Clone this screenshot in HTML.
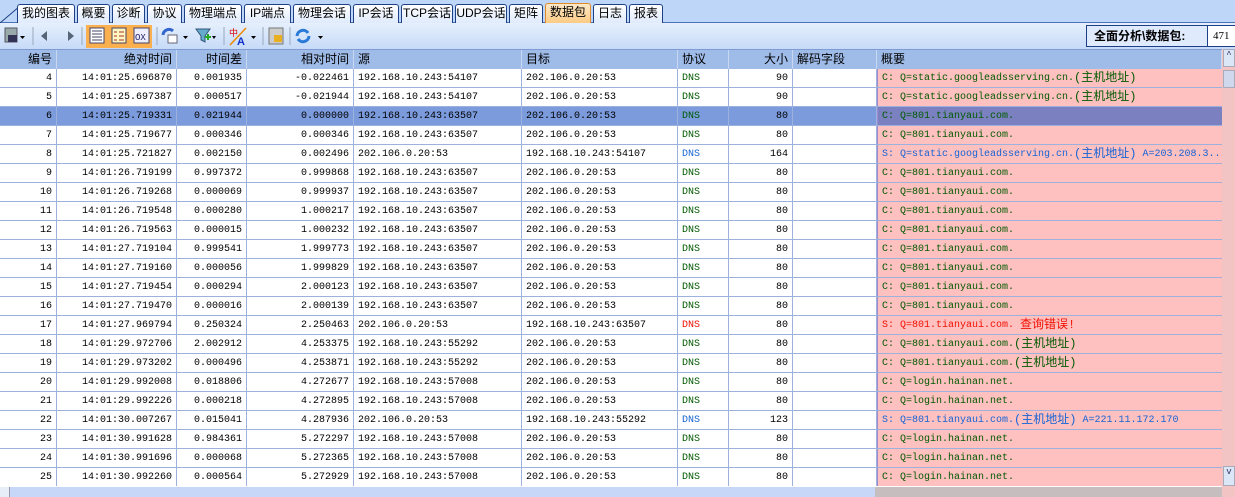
<!DOCTYPE html>
<html><head><meta charset="utf-8"><style>
*{margin:0;padding:0;box-sizing:border-box}
body{width:1235px;height:497px;overflow:hidden;background:#fff;position:relative;font-family:"Liberation Mono","Noto Sans CJK SC",monospace;font-size:10px}
.tabs{position:absolute;left:0;top:0;width:1235px;height:23px;background:#bed6f7;border-bottom:1px solid #4e72b8}
.tab{position:absolute;top:4px;height:19px;border:1px solid #1c3f86;border-bottom:none;border-radius:3px 3px 0 0;background:linear-gradient(#fff,#dfeafc);font-size:12px;line-height:17px;text-align:center;font-family:"Liberation Sans","Noto Sans CJK SC",sans-serif;color:#000;white-space:nowrap;overflow:hidden}
.tab.act{background:linear-gradient(#fde9c8,#fcc980);top:3px;height:21px;border-color:#e08a2a}
.tb{position:absolute;left:0;top:23px;width:1235px;height:26px;background:linear-gradient(#e6f0fd,#c6daf8)}
.hdr{position:absolute;left:0;top:49px;height:20px;width:1222px;background:#9fbbe8;border-top:1px solid #7f9bd4;display:flex}
.hdr div{height:19px;border-right:1px solid #c8d8f2;font-size:12px;line-height:19px;padding:0 4px;font-family:"Liberation Sans","Noto Sans CJK SC",sans-serif;white-space:nowrap;overflow:hidden}
.r{position:absolute;left:0;height:19px;width:1222px;display:flex;border-bottom:1px solid #9cb1dc}
.r div{height:18px;line-height:19px;border-right:1px solid #9cb1dc;padding:0 4px;white-space:nowrap;overflow:hidden;color:#000}
.c1{width:57px;text-align:right}.c2{width:120px;text-align:right}.c3{width:70px;text-align:right}.c4{width:107px;text-align:right}.c5{width:168px}.c6{width:156px}.c7{width:51px}.c8{width:64px;text-align:right}.c9{width:84px}.c10{width:345px;background:#ffc0c0}
.r .c10{border-left:1px solid #9c8cd0;border-right:none}
.sel{background:#7b9bdc}.sel .c10{background:#7b80c0}
.g{color:#005a00!important}.b{color:#1664d4!important}.rd{color:#f01000!important}
.k{font-size:12px;line-height:10px;display:inline-block;vertical-align:top;margin-top:4px}
</style></head><body>
<div class="tabs">
<svg style="position:absolute;left:0;top:4px" width="20" height="19"><path d="M0 19 L20 2" stroke="#1c3f86" fill="none"/></svg>
<div class="tab" style="left:17px;width:58px">我的图表</div>
<div class="tab" style="left:77px;width:33px">概要</div>
<div class="tab" style="left:112px;width:33px">诊断</div>
<div class="tab" style="left:147px;width:35px">协议</div>
<div class="tab" style="left:184px;width:58px">物理端点</div>
<div class="tab" style="left:244px;width:47px">IP端点</div>
<div class="tab" style="left:293px;width:58px">物理会话</div>
<div class="tab" style="left:353px;width:46px">IP会话</div>
<div class="tab" style="left:401px;width:52px">TCP会话</div>
<div class="tab" style="left:455px;width:52px">UDP会话</div>
<div class="tab" style="left:509px;width:34px">矩阵</div>
<div class="tab act" style="left:545px;width:46px">数据包</div>
<div class="tab" style="left:593px;width:34px">日志</div>
<div class="tab" style="left:629px;width:34px">报表</div>
</div>
<div class="tb">
<svg style="position:absolute;left:0;top:0" width="340" height="26">
<rect x="5" y="5" width="12" height="14" fill="#9aa" stroke="#556"/><rect x="8" y="12" width="9" height="7" fill="#335"/><path d="M20 13h5l-2.5 3z" fill="#000"/>
<line x1="33" y1="4" x2="33" y2="22" stroke="#9ab"/>
<path d="M41 13l6-5v10z" fill="#567"/><path d="M74 13l-6-5v10z" fill="#567"/>
<line x1="82" y1="4" x2="82" y2="22" stroke="#9ab"/>
<rect x="86" y="2" width="66" height="23" fill="#fbb050"/>
<rect x="90" y="5" width="14" height="15" fill="#fff" stroke="#446"/><path d="M92 8h10M92 11h10M92 14h10M92 17h10" stroke="#446"/>
<rect x="112" y="5" width="14" height="15" fill="#fff6c0" stroke="#446"/><path d="M114 9h3M119 9h5M114 13h3M119 13h5M114 17h3M119 17h5" stroke="#a33"/>
<rect x="134" y="5" width="15" height="15" fill="#eef" stroke="#446"/><text x="135" y="17" font-size="9" fill="#226">OX</text>
<line x1="157" y1="4" x2="157" y2="22" stroke="#9ab"/>
<path d="M163 12a6 6 0 0 1 10-4" stroke="#36c" stroke-width="3" fill="none"/><rect x="168" y="12" width="9" height="8" fill="#fff" stroke="#667"/><path d="M183 13h5l-2.5 3z" fill="#000"/>
<path d="M196 6h14l-5 7v6l-4-2v-4z" fill="#6ac" stroke="#357"/><path d="M205 14h6M208 11v6" stroke="#2a2" stroke-width="2"/><path d="M212 13h4l-2 3z" fill="#000"/>
<line x1="224" y1="4" x2="224" y2="22" stroke="#9ab"/>
<text x="229" y="13" font-size="9" fill="#d00" font-family="Noto Sans CJK SC">中</text><text x="237" y="22" font-size="11" fill="#13c" font-weight="bold" font-family="Liberation Sans">A</text><path d="M230 22l16-17" stroke="#e80" stroke-width="1.5"/><path d="M251 13h5l-2.5 3z" fill="#000"/>
<line x1="263" y1="4" x2="263" y2="22" stroke="#9ab"/>
<rect x="269" y="5" width="14" height="16" fill="#ccc" stroke="#777"/><rect x="274" y="12" width="8" height="7" fill="#e8b020"/>
<line x1="290" y1="4" x2="290" y2="22" stroke="#9ab"/>
<path d="M297 13a6 6 0 0 1 11-3M309 13a6 6 0 0 1-11 3" stroke="#2a7ad8" stroke-width="3" fill="none"/><path d="M318 13h5l-2.5 3z" fill="#000"/>
</svg>
<div style="position:absolute;left:1086px;top:2px;width:122px;height:22px;border:1px solid #1c3f86;background:#dfeafc;font:bold 12px 'Liberation Sans','Noto Sans CJK SC',sans-serif;line-height:20px;padding-left:7px">全面分析\数据包:</div>
<div style="position:absolute;left:1207px;top:2px;width:28px;height:22px;border:1px solid #1c3f86;border-right:none;background:#fff;font:11px 'Liberation Serif',serif;line-height:20px;padding-left:5px">471</div>
</div>
<div class="hdr">
<div style="width:57px;text-align:right">编号</div><div style="width:120px;text-align:right">绝对时间</div><div style="width:70px;text-align:right">时间差</div><div style="width:107px;text-align:right">相对时间</div><div style="width:168px">源</div><div style="width:156px">目标</div><div style="width:51px">协议</div><div style="width:64px;text-align:right">大小</div><div style="width:84px">解码字段</div><div style="width:345px">概要</div>
</div>
<div style="position:absolute;left:1222px;top:49px;width:13px;height:438px;background:#f2c4c4"></div>
<div style="position:absolute;left:1223px;top:49px;width:12px;height:18px;background:#dbe6f6;border:1px solid #aab;font-size:9px;text-align:center;color:#336">^</div>
<div style="position:absolute;left:1223px;top:70px;width:12px;height:18px;background:#cfd8ec;border:1px solid #aab"></div>
<div style="position:absolute;left:1223px;top:466px;width:12px;height:20px;background:#dbe6f6;border:1px solid #aab;font-size:9px;text-align:center;color:#336">v</div>

<div class="r" style="top:69px"><div class="c1">4</div><div class="c2">14:01:25.696870</div><div class="c3">0.001935</div><div class="c4">-0.022461</div><div class="c5">192.168.10.243:54107</div><div class="c6">202.106.0.20:53</div><div class="c7 g">DNS</div><div class="c8">90</div><div class="c9"></div><div class="c10 g">C: Q=static.googleadsserving.cn.<span class="k">(主机地址)</span></div></div>
<div class="r" style="top:88px"><div class="c1">5</div><div class="c2">14:01:25.697387</div><div class="c3">0.000517</div><div class="c4">-0.021944</div><div class="c5">192.168.10.243:54107</div><div class="c6">202.106.0.20:53</div><div class="c7 g">DNS</div><div class="c8">90</div><div class="c9"></div><div class="c10 g">C: Q=static.googleadsserving.cn.<span class="k">(主机地址)</span></div></div>
<div class="r sel" style="top:107px"><div class="c1">6</div><div class="c2">14:01:25.719331</div><div class="c3">0.021944</div><div class="c4">0.000000</div><div class="c5">192.168.10.243:63507</div><div class="c6">202.106.0.20:53</div><div class="c7 g">DNS</div><div class="c8">80</div><div class="c9"></div><div class="c10 g">C: Q=801.tianyaui.com.</div></div>
<div class="r" style="top:126px"><div class="c1">7</div><div class="c2">14:01:25.719677</div><div class="c3">0.000346</div><div class="c4">0.000346</div><div class="c5">192.168.10.243:63507</div><div class="c6">202.106.0.20:53</div><div class="c7 g">DNS</div><div class="c8">80</div><div class="c9"></div><div class="c10 g">C: Q=801.tianyaui.com.</div></div>
<div class="r" style="top:145px"><div class="c1">8</div><div class="c2">14:01:25.721827</div><div class="c3">0.002150</div><div class="c4">0.002496</div><div class="c5">202.106.0.20:53</div><div class="c6">192.168.10.243:54107</div><div class="c7 b">DNS</div><div class="c8">164</div><div class="c9"></div><div class="c10 b">S: Q=static.googleadsserving.cn.<span class="k">(主机地址)</span> A=203.208.3..</div></div>
<div class="r" style="top:164px"><div class="c1">9</div><div class="c2">14:01:26.719199</div><div class="c3">0.997372</div><div class="c4">0.999868</div><div class="c5">192.168.10.243:63507</div><div class="c6">202.106.0.20:53</div><div class="c7 g">DNS</div><div class="c8">80</div><div class="c9"></div><div class="c10 g">C: Q=801.tianyaui.com.</div></div>
<div class="r" style="top:183px"><div class="c1">10</div><div class="c2">14:01:26.719268</div><div class="c3">0.000069</div><div class="c4">0.999937</div><div class="c5">192.168.10.243:63507</div><div class="c6">202.106.0.20:53</div><div class="c7 g">DNS</div><div class="c8">80</div><div class="c9"></div><div class="c10 g">C: Q=801.tianyaui.com.</div></div>
<div class="r" style="top:202px"><div class="c1">11</div><div class="c2">14:01:26.719548</div><div class="c3">0.000280</div><div class="c4">1.000217</div><div class="c5">192.168.10.243:63507</div><div class="c6">202.106.0.20:53</div><div class="c7 g">DNS</div><div class="c8">80</div><div class="c9"></div><div class="c10 g">C: Q=801.tianyaui.com.</div></div>
<div class="r" style="top:221px"><div class="c1">12</div><div class="c2">14:01:26.719563</div><div class="c3">0.000015</div><div class="c4">1.000232</div><div class="c5">192.168.10.243:63507</div><div class="c6">202.106.0.20:53</div><div class="c7 g">DNS</div><div class="c8">80</div><div class="c9"></div><div class="c10 g">C: Q=801.tianyaui.com.</div></div>
<div class="r" style="top:240px"><div class="c1">13</div><div class="c2">14:01:27.719104</div><div class="c3">0.999541</div><div class="c4">1.999773</div><div class="c5">192.168.10.243:63507</div><div class="c6">202.106.0.20:53</div><div class="c7 g">DNS</div><div class="c8">80</div><div class="c9"></div><div class="c10 g">C: Q=801.tianyaui.com.</div></div>
<div class="r" style="top:259px"><div class="c1">14</div><div class="c2">14:01:27.719160</div><div class="c3">0.000056</div><div class="c4">1.999829</div><div class="c5">192.168.10.243:63507</div><div class="c6">202.106.0.20:53</div><div class="c7 g">DNS</div><div class="c8">80</div><div class="c9"></div><div class="c10 g">C: Q=801.tianyaui.com.</div></div>
<div class="r" style="top:278px"><div class="c1">15</div><div class="c2">14:01:27.719454</div><div class="c3">0.000294</div><div class="c4">2.000123</div><div class="c5">192.168.10.243:63507</div><div class="c6">202.106.0.20:53</div><div class="c7 g">DNS</div><div class="c8">80</div><div class="c9"></div><div class="c10 g">C: Q=801.tianyaui.com.</div></div>
<div class="r" style="top:297px"><div class="c1">16</div><div class="c2">14:01:27.719470</div><div class="c3">0.000016</div><div class="c4">2.000139</div><div class="c5">192.168.10.243:63507</div><div class="c6">202.106.0.20:53</div><div class="c7 g">DNS</div><div class="c8">80</div><div class="c9"></div><div class="c10 g">C: Q=801.tianyaui.com.</div></div>
<div class="r" style="top:316px"><div class="c1">17</div><div class="c2">14:01:27.969794</div><div class="c3">0.250324</div><div class="c4">2.250463</div><div class="c5">202.106.0.20:53</div><div class="c6">192.168.10.243:63507</div><div class="c7 rd">DNS</div><div class="c8">80</div><div class="c9"></div><div class="c10 rd">S: Q=801.tianyaui.com. <span class="k">查询错误!</span></div></div>
<div class="r" style="top:335px"><div class="c1">18</div><div class="c2">14:01:29.972706</div><div class="c3">2.002912</div><div class="c4">4.253375</div><div class="c5">192.168.10.243:55292</div><div class="c6">202.106.0.20:53</div><div class="c7 g">DNS</div><div class="c8">80</div><div class="c9"></div><div class="c10 g">C: Q=801.tianyaui.com.<span class="k">(主机地址)</span></div></div>
<div class="r" style="top:354px"><div class="c1">19</div><div class="c2">14:01:29.973202</div><div class="c3">0.000496</div><div class="c4">4.253871</div><div class="c5">192.168.10.243:55292</div><div class="c6">202.106.0.20:53</div><div class="c7 g">DNS</div><div class="c8">80</div><div class="c9"></div><div class="c10 g">C: Q=801.tianyaui.com.<span class="k">(主机地址)</span></div></div>
<div class="r" style="top:373px"><div class="c1">20</div><div class="c2">14:01:29.992008</div><div class="c3">0.018806</div><div class="c4">4.272677</div><div class="c5">192.168.10.243:57008</div><div class="c6">202.106.0.20:53</div><div class="c7 g">DNS</div><div class="c8">80</div><div class="c9"></div><div class="c10 g">C: Q=login.hainan.net.</div></div>
<div class="r" style="top:392px"><div class="c1">21</div><div class="c2">14:01:29.992226</div><div class="c3">0.000218</div><div class="c4">4.272895</div><div class="c5">192.168.10.243:57008</div><div class="c6">202.106.0.20:53</div><div class="c7 g">DNS</div><div class="c8">80</div><div class="c9"></div><div class="c10 g">C: Q=login.hainan.net.</div></div>
<div class="r" style="top:411px"><div class="c1">22</div><div class="c2">14:01:30.007267</div><div class="c3">0.015041</div><div class="c4">4.287936</div><div class="c5">202.106.0.20:53</div><div class="c6">192.168.10.243:55292</div><div class="c7 b">DNS</div><div class="c8">123</div><div class="c9"></div><div class="c10 b">S: Q=801.tianyaui.com.<span class="k">(主机地址)</span> A=221.11.172.170</div></div>
<div class="r" style="top:430px"><div class="c1">23</div><div class="c2">14:01:30.991628</div><div class="c3">0.984361</div><div class="c4">5.272297</div><div class="c5">192.168.10.243:57008</div><div class="c6">202.106.0.20:53</div><div class="c7 g">DNS</div><div class="c8">80</div><div class="c9"></div><div class="c10 g">C: Q=login.hainan.net.</div></div>
<div class="r" style="top:449px"><div class="c1">24</div><div class="c2">14:01:30.991696</div><div class="c3">0.000068</div><div class="c4">5.272365</div><div class="c5">192.168.10.243:57008</div><div class="c6">202.106.0.20:53</div><div class="c7 g">DNS</div><div class="c8">80</div><div class="c9"></div><div class="c10 g">C: Q=login.hainan.net.</div></div>
<div class="r" style="top:468px;border-bottom:none"><div class="c1">25</div><div class="c2">14:01:30.992260</div><div class="c3">0.000564</div><div class="c4">5.272929</div><div class="c5">192.168.10.243:57008</div><div class="c6">202.106.0.20:53</div><div class="c7 g">DNS</div><div class="c8">80</div><div class="c9"></div><div class="c10 g">C: Q=login.hainan.net.</div></div>

<div style="position:absolute;left:0;top:487px;width:1235px;height:10px;background:#c7d7f7"></div>
<div style="position:absolute;left:0;top:487px;width:10px;height:10px;background:#e8eef8;border-right:1px solid #99a"></div>
<div style="position:absolute;left:875px;top:487px;width:347px;height:10px;background:#c6bebe"></div>
<div style="position:absolute;left:1222px;top:487px;width:13px;height:10px;background:#f2c4c4"></div>
</body></html>
